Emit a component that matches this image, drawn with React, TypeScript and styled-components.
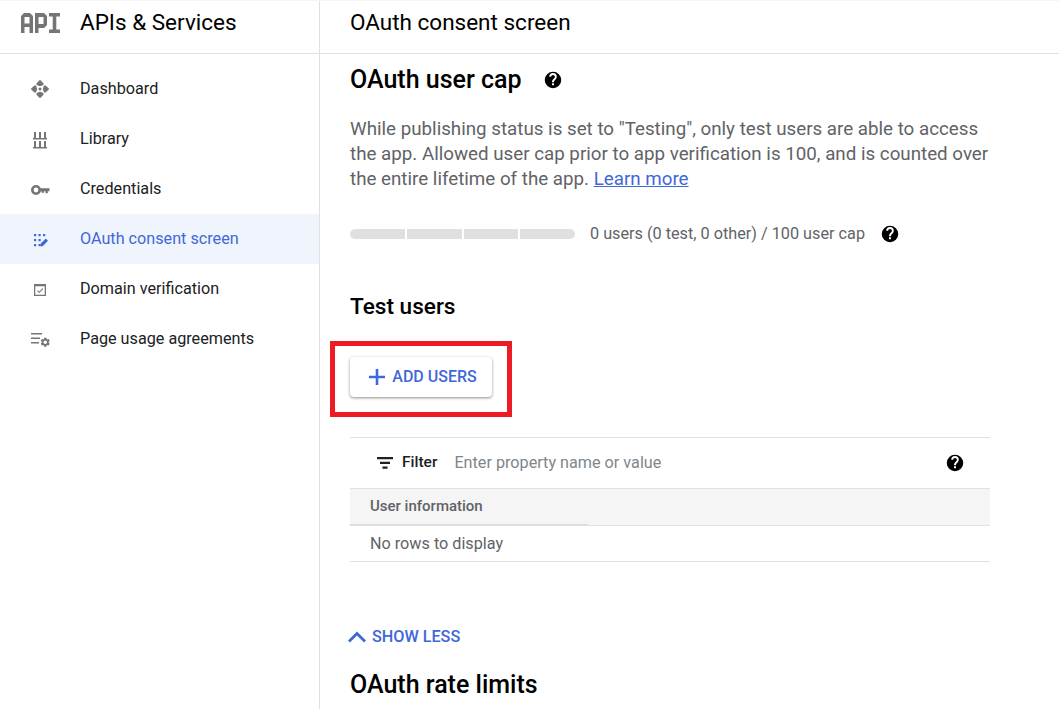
import React from "react";
import styled, { createGlobalStyle } from "styled-components";

const GlobalStyle = createGlobalStyle`
  html, body {
    margin: 0;
    padding: 0;
    height: 100%;
    overflow: hidden;
    background: #fff;
    font-family: Roboto, "Liberation Sans", sans-serif;
  }
  #root { height: 100%; }
`;

const BLUE = "#3f68d8";

const navItems = [
  { label: "Dashboard", icon: <DashboardIcon /> },
  { label: "Library", icon: <LibraryIcon /> },
  { label: "Credentials", icon: <KeyIcon /> },
  { label: "OAuth consent screen", icon: <ConsentIcon />, active: true },
  { label: "Domain verification", icon: <DomainIcon /> },
  { label: "Page usage agreements", icon: <AgreementIcon /> },
];

export default function App() {
  return (
    <Page>
      <GlobalStyle />
      <Sidebar>
        <SideHeader>
          <ApiLogo viewBox="0 0 40 20">
            <path
              d="M0 20V3l3-3h6l3 3v17H8.500v-6h-5v6zM3.500 10.500h5V4h-5zM14 20V0h9l3 3v9l-3 3h-5.500v5zM17.500 11h5V4h-5zM28 0h11v3.500h-3.700v13H39V20H28v-3.500h3.700v-13H28z"
              fill="#757575"
              fillRule="evenodd"
            />
          </ApiLogo>
          <SideTitle>APIs &amp; Services</SideTitle>
        </SideHeader>
        <NavList>
          {navItems.map((item) => (
            <NavRow key={item.label} $active={item.active}>
              <NavIcon>{item.icon}</NavIcon>
              <NavLabel>{item.label}</NavLabel>
            </NavRow>
          ))}
        </NavList>
      </Sidebar>
      <Main>
        <MainHeader>OAuth consent screen</MainHeader>
        <Content>
          <CapHeading>
            <SectionTitle>OAuth user cap</SectionTitle>
            <HelpIcon size={18} />
          </CapHeading>
          <Description>
            While publishing status is set to "Testing", only test users are able to access
            the app. Allowed user cap prior to app verification is 100, and is counted over
            the entire lifetime of the app. <LearnMore href="#">Learn more</LearnMore>
          </Description>
          <UsageRow>
            <UsageBar>
              <UsageSegment />
              <UsageSegment />
              <UsageSegment />
              <UsageSegment />
            </UsageBar>
            <UsageText>0 users (0 test, 0 other) / 100 user cap</UsageText>
            <HelpIcon size={18} />
          </UsageRow>
          <TestUsersTitle>Test users</TestUsersTitle>
          <ButtonWrap>
            <AddButton>
              <svg width="18" height="18" viewBox="0 0 18 18">
                <path d="M7.700 1h2.600v6.700H17v2.600h-6.700V17H7.700v-6.700H1V7.700h6.700z" fill={BLUE} />
              </svg>
              <ButtonLabel>ADD USERS</ButtonLabel>
            </AddButton>
            <Highlight />
          </ButtonWrap>
          <FilterBar>
            <FilterIcon width="18" height="18" viewBox="0 0 18 18">
              <path d="M1 3h16v2.300H1zM4 7.800h10v2.300H4zM6.500 12.500h5v2.300h-5z" fill="#202124" />
            </FilterIcon>
            <FilterLabel>Filter</FilterLabel>
            <FilterHint>Enter property name or value</FilterHint>
            <HelpIcon size={18} />
          </FilterBar>
          <TableHead>
            <HeadCell>User information</HeadCell>
          </TableHead>
          <EmptyRow>No rows to display</EmptyRow>
          <ShowLess>
            <svg width="20" height="14" viewBox="0 0 20 14">
              <path d="M2 11.500L10 3.500l8 8" fill="none" stroke={BLUE} strokeWidth="2.800" />
            </svg>
            SHOW LESS
          </ShowLess>
          <SectionTitle>OAuth rate limits</SectionTitle>
        </Content>
      </Main>
    </Page>
  );
}

function DashboardIcon() {
  return (
    <svg width="20" height="20" viewBox="0 0 20 20" fill="#757575">
      <path d="M10 .8l3.500 3.500V6L10 7.200 6.500 6V4.300zM10 19.200l-3.500-3.500V14l3.500-1.200 3.500 1.200v1.700zM.8 10l3.500-3.500H6L7.200 10 6 13.500H4.300zM19.200 10l-3.500 3.500H14L12.800 10 14 6.500h1.700z" />
      <circle cx="10" cy="10" r="1.500" />
    </svg>
  );
}

function LibraryIcon() {
  return (
    <svg width="20" height="20" viewBox="0 0 20 20" fill="#757575">
      <path d="M4 3h2v6H4zM9 3h2v6H9zM14 3h2v6h-2zM3 9h14v1.500H3zM4 12h2v6H4zM9 12h2v6H9zM14 12h2v6h-2zM3 18h14v1.500H3z" />
    </svg>
  );
}

function KeyIcon() {
  return (
    <svg width="20" height="20" viewBox="0 0 20 20">
      <circle cx="6" cy="11" r="3.700" fill="none" stroke="#757575" strokeWidth="2.600" />
      <path d="M10 9.300h9.500v3h-1.700v2h-2.300v-2h-1.500v1.500H11.500v-1.500H10z" fill="#757575" />
    </svg>
  );
}

function ConsentIcon() {
  return (
    <svg width="20" height="20" viewBox="0 0 20 20" fill={BLUE}>
      <rect x="4" y="5" width="2.200" height="2.200" />
      <rect x="8.500" y="5" width="2.200" height="2.200" />
      <rect x="13" y="5" width="2.200" height="2.200" />
      <rect x="4" y="10" width="2.200" height="2.200" />
      <rect x="8.500" y="10" width="2.200" height="2.200" />
      <rect x="4" y="15" width="2.200" height="2.200" />
      <rect x="8.500" y="15" width="2.200" height="2.200" />
      <path d="M10.500 17.200v-2.400l5.300-5.300 2.200 2.200-5.300 5.500z" />
    </svg>
  );
}

function DomainIcon() {
  return (
    <svg width="20" height="20" viewBox="0 0 20 20">
      <path d="M4 5h12v12H4zM5.300 7.300v8.400h9.400V7.300z" fill="#757575" fillRule="evenodd" />
      <path d="M7.500 11.500l1.800 1.800 3.500-3.800" fill="none" stroke="#8a8a8a" strokeWidth="1.200" />
    </svg>
  );
}

function AgreementIcon() {
  return (
    <svg width="20" height="20" viewBox="0 0 20 20" fill="#757575">
      <path d="M1 4h11v1.500H1zM1 8.500h9V10H1zM1 13h8v1.500H1z" />
      <path
        transform="translate(9.500 7.500) scale(0.480)"
        fillRule="evenodd"
        d="M19.140 12.940c.04-.3.06-.61.06-.94 0-.32-.02-.64-.07-.94l2.030-1.580a.49.49 0 00.12-.61l-1.920-3.320a.488.488 0 00-.59-.22l-2.390.96c-.5-.38-1.030-.7-1.620-.94l-.36-2.540a.484.484 0 00-.48-.41h-3.840c-.24 0-.43.17-.47.41l-.36 2.540c-.59.24-1.130.57-1.620.94l-2.390-.96c-.22-.08-.47 0-.59.22L2.740 8.870c-.12.21-.08.47.12.61l2.030 1.580c-.05.3-.09.63-.09.94s.02.64.07.94l-2.030 1.580a.49.49 0 00-.12.61l1.920 3.320c.12.22.37.29.59.22l2.390-.96c.5.38 1.030.7 1.620.94l.36 2.540c.05.24.24.41.48.41h3.840c.24 0 .44-.17.47-.41l.36-2.540c.59-.24 1.130-.56 1.620-.94l2.390.96c.22.08.47 0 .59-.22l1.920-3.320c.12-.22.07-.47-.12-.61l-2.010-1.580zM12 15.600c-1.980 0-3.600-1.620-3.600-3.600s1.620-3.600 3.600-3.600 3.600 1.620 3.600 3.600-1.620 3.600-3.600 3.600z"
      />
    </svg>
  );
}

function HelpIcon({ size }: { size: number }) {
  return (
    <svg width={size} height={size} viewBox="0 0 24 24" style={{ flexShrink: 0 }}>
      <path
        d="M12 1a11 11 0 100 22 11 11 0 000-22zm1.300 18h-2.600v-2.600h2.600zm2.600-8.300l-1.100 1.200c-1 .9-1.500 1.700-1.500 3.100h-2.600v-.6c0-1.300.5-2.500 1.500-3.400l1.600-1.600c.4-.4.700-1 .7-1.700a2.500 2.500 0 00-5 0H7a5 5 0 0110 0c0 1.100-.4 2.100-1.100 3z"
        fill="#000"
      />
    </svg>
  );
}

const Page = styled.div`
  display: flex;
  width: 1059px;
  height: 709px;
  overflow: hidden;
  border-top: 1px solid #f5f5f5;
  box-sizing: border-box;
`;

const Sidebar = styled.aside`
  width: 320px;
  flex-shrink: 0;
  border-right: 1px solid #e0e0e0;
  box-sizing: border-box;
`;

const SideHeader = styled.div`
  display: flex;
  align-items: flex-start;
  height: 45px;
  padding: 7px 0 0 21px;
  border-bottom: 1px solid #e0e0e0;
`;

const ApiLogo = styled.svg`
  width: 40px;
  height: 20px;
  margin: 5px 19px 0 0;
`;

const SideTitle = styled.div`
  font-size: 22.500px;
  line-height: 28px;
  color: #000;
`;

const NavList = styled.nav`
  padding-top: 10px;
`;

const NavRow = styled.div<{ $active?: boolean }>`
  display: flex;
  align-items: center;
  height: 50px;
  padding-left: 30px;
  background: ${(p) => (p.$active ? "#f0f4fd" : "transparent")};
  color: ${(p) => (p.$active ? BLUE : "#202124")};
`;

const NavIcon = styled.div`
  display: flex;
  width: 20px;
  height: 20px;
  margin-right: 30px;
`;

const NavLabel = styled.span`
  font-size: 16.200px;
  padding-bottom: 2px;
`;

const Main = styled.main`
  flex: 1;
  min-width: 0;
`;

const MainHeader = styled.div`
  height: 45px;
  padding: 7px 0 0 30px;
  border-bottom: 1px solid #e0e0e0;
  font-size: 22.500px;
  line-height: 28px;
  color: #000;
`;

const Content = styled.div`
  width: 640px;
  padding-left: 30px;
`;

const CapHeading = styled.div`
  display: flex;
  align-items: center;
  gap: 22px;
  margin-top: 11px;
`;

const SectionTitle = styled.h2`
  margin: 0;
  font-size: 25px;
  line-height: 30px;
  font-weight: 500;
  color: #000;
`;

const Description = styled.p`
  margin: 22px 0 0;
  font-size: 18.760px;
  line-height: 25px;
  color: #5f6368;
`;

const LearnMore = styled.a`
  color: ${BLUE};
`;

const UsageRow = styled.div`
  display: flex;
  align-items: center;
  margin-top: 32px;
`;

const UsageBar = styled.div`
  display: flex;
  gap: 2px;
  width: 225px;
  height: 10px;
  border-radius: 5px;
  overflow: hidden;
  margin-right: 15px;
`;

const UsageSegment = styled.div`
  flex: 1;
  background: #e0e0e0;
`;

const UsageText = styled.span`
  font-size: 16.240px;
  color: #5f6368;
  margin-right: 16px;
`;

const TestUsersTitle = styled.h3`
  margin: 50px 0 0;
  font-size: 22.600px;
  line-height: 28px;
  font-weight: 500;
  color: #000;
`;

const ButtonWrap = styled.div`
  position: relative;
  width: 142px;
  margin-top: 36px;
`;

const AddButton = styled.button`
  display: flex;
  align-items: center;
  justify-content: center;
  gap: 6px;
  width: 142px;
  height: 40px;
  padding: 0 0 0 3px;
  border: 0;
  border-radius: 4px;
  background: #fff;
  box-shadow: 0 1px 3px rgba(0, 0, 0, 0.45);
  font-family: inherit;
  font-size: 16px;
  font-weight: 500;
  color: ${BLUE};
`;

const ButtonLabel = styled.span`
  padding-bottom: 2px;
`;

const Highlight = styled.div`
  position: absolute;
  left: -20px;
  top: -16px;
  width: 182px;
  height: 76px;
  border: 5px solid #ed1c24;
  box-sizing: border-box;
  pointer-events: none;
`;

const FilterBar = styled.div`
  display: flex;
  align-items: center;
  height: 50px;
  margin-top: 40px;
  padding: 0 26px;
  border-top: 1px solid #e0e0e0;
  border-bottom: 1px solid #e0e0e0;
`;

const FilterIcon = styled.svg`
  margin-right: 8px;
`;

const FilterLabel = styled.span`
  font-size: 15.500px;
  font-weight: 500;
  color: #202124;
  margin-right: 17px;
  padding-bottom: 2px;
`;

const FilterHint = styled.span`
  flex: 1;
  font-size: 16.200px;
  color: #80868b;
  padding-bottom: 2px;
`;

const TableHead = styled.div`
  display: flex;
  height: 36px;
  background: #f5f5f5;
  border-bottom: 1px solid #e0e0e0;
`;

const HeadCell = styled.span`
  display: flex;
  align-items: center;
  width: 218px;
  padding: 0 0 2px 20px;
  border-bottom: 1px solid #dcdcdc;
  font-size: 15px;
  font-weight: 500;
  color: #5f6368;
`;

const EmptyRow = styled.div`
  display: flex;
  align-items: center;
  height: 35px;
  padding-left: 20px;
  border-bottom: 1px solid #e0e0e0;
  font-size: 16.200px;
  color: #5f6368;
`;

const ShowLess = styled.div`
  display: flex;
  align-items: center;
  gap: 5px;
  margin: 65px 0 24px -3px;
  font-size: 16.200px;
  font-weight: 500;
  color: ${BLUE};
`;
